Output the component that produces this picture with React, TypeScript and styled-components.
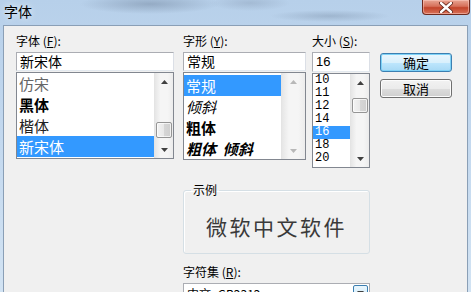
import React from "react";
import styled, { createGlobalStyle } from "styled-components";

const GlobalStyle = createGlobalStyle`
  html, body {
    margin: 0;
    padding: 0;
  }
  body {
    width: 471px;
    height: 292px;
    overflow: hidden;
    font-family: "Noto Sans CJK SC", "Liberation Sans", sans-serif;
    color: #000;
  }
  * {
    box-sizing: border-box;
  }
`;

const fonts = [
  { name: "仿宋", weight: 400, color: "#666" },
  { name: "黑体", weight: 700, color: "#000" },
  { name: "楷体", weight: 400, color: "#222" },
  { name: "新宋体", weight: 400, color: "#000" },
];

const styles = [
  { name: "常规", bold: false, italic: false },
  { name: "倾斜", bold: false, italic: true },
  { name: "粗体", bold: true, italic: false },
  { name: "粗体  倾斜", bold: true, italic: true },
];

const sizes = ["10", "11", "12", "14", "16", "18", "20"];

const Arrow = ({ up, disabled }: { up?: boolean; disabled?: boolean }) => (
  <svg width="7" height="4" viewBox="0 0 7 4">
    <path
      d={up ? "M0 4 L3.5 0 L7 4 Z" : "M0 0 L3.5 4 L7 0 Z"}
      fill={disabled ? "#b8b8b8" : "#404040"}
    />
  </svg>
);

const ScrollBar = ({
  width,
  thumbTop,
  thumbHeight,
  disabled,
}: {
  width: number;
  thumbTop?: number;
  thumbHeight?: number;
  disabled?: boolean;
}) => (
  <Bar $width={width}>
    <BarButton>
      <Arrow up disabled={disabled} />
    </BarButton>
    <Track>
      {thumbHeight ? <Thumb $top={thumbTop || 0} $height={thumbHeight} /> : null}
    </Track>
    <BarButton>
      <Arrow disabled={disabled} />
    </BarButton>
  </Bar>
);

const App = () => {
  return (
    <>
      <GlobalStyle />
      <Frame>
        <TitleBar>
          <Title>字体</Title>
          <CloseButton>
            <svg width="14" height="11" viewBox="0 0 14 11">
              <path
                d="M2 1 L12 10 M12 1 L2 10"
                stroke="#5a1d12"
                strokeWidth="4"
                strokeLinecap="round"
              />
              <path
                d="M2 1 L12 10 M12 1 L2 10"
                stroke="#fff"
                strokeWidth="2.4"
                strokeLinecap="round"
              />
            </svg>
          </CloseButton>
        </TitleBar>
        <Client>
          <FontColumn>
            <Label>
              字体 (<u>F</u>):
            </Label>
            <TextBox>新宋体</TextBox>
            <ListBox $height={87}>
              <Items>
                {fonts.map((f) => (
                  <FontItem
                    key={f.name}
                    $weight={f.weight}
                    $color={f.color}
                    $selected={f.name === "新宋体"}
                  >
                    {f.name}
                  </FontItem>
                ))}
              </Items>
              <ScrollBar width={19} thumbTop={32} thumbHeight={16} />
            </ListBox>
          </FontColumn>

          <Middle>
            <TopRow>
              <StyleColumn>
                <Label>
                  字形 (<u>Y</u>):
                </Label>
                <TextBox>常规</TextBox>
                <ListBox $height={88}>
                  <Items $padTop={2}>
                    {styles.map((s) => (
                      <StyleItem
                        key={s.name}
                        $bold={s.bold}
                        $italic={s.italic}
                        $selected={s.name === "常规"}
                      >
                        {s.name}
                      </StyleItem>
                    ))}
                  </Items>
                  <ScrollBar width={24} disabled />
                </ListBox>
              </StyleColumn>

              <SizeColumn>
                <Label>
                  大小 (<u>S</u>):
                </Label>
                <TextBox $height={20} $num>
                  16
                </TextBox>
                <ListBox $height={95}>
                  <Items>
                    {sizes.map((s) => (
                      <SizeItem key={s} $selected={s === "16"}>
                        {s}
                      </SizeItem>
                    ))}
                  </Items>
                  <ScrollBar width={19} thumbTop={7} thumbHeight={15} />
                </ListBox>
              </SizeColumn>
            </TopRow>

            <SampleGroup>
              <legend>示例</legend>
              <SampleText>微软中文软件</SampleText>
            </SampleGroup>

            <Label $top={10}>
              字符集 (<u>R</u>):
            </Label>
            <Combo>
              <span>中文_GB2312</span>
              <DropButton>
                <Arrow />
              </DropButton>
            </Combo>
          </Middle>

          <ButtonColumn>
            <PushButton $default>确定</PushButton>
            <PushButton>取消</PushButton>
          </ButtonColumn>
        </Client>
      </Frame>
    </>
  );
};

export default App;

const Frame = styled.div`
  width: 471px;
  height: 292px;
  display: flex;
  flex-direction: column;
  padding: 0 3px;
  background:
    radial-gradient(ellipse 70px 10px at 150px 4px, rgba(120, 140, 165, 0.55), transparent),
    radial-gradient(ellipse 40px 8px at 250px 3px, rgba(140, 160, 185, 0.45), transparent),
    radial-gradient(ellipse 60px 6px at 330px 16px, rgba(110, 130, 155, 0.35), transparent),
    linear-gradient(to bottom, #b7d0ea 0%, #c4d9ef 50%, #d2e3f3 100%);
`;

const TitleBar = styled.div`
  height: 25px;
  flex-shrink: 0;
  display: flex;
  justify-content: space-between;
  align-items: flex-start;
`;

const Title = styled.div`
  font-size: 14px;
  line-height: 16px;
  padding: 3px 0 0 1px;
  text-shadow: 0 0 6px rgba(255, 255, 255, 0.9);
`;

const CloseButton = styled.div`
  width: 48px;
  height: 15px;
  margin-right: -2px;
  display: flex;
  align-items: center;
  justify-content: center;
  border: 1px solid #6e2a1e;
  border-top: none;
  border-radius: 0 0 4px 4px;
  background: linear-gradient(to bottom, #e8a593 0%, #d6705a 45%, #c2442a 55%, #d9735a 100%);
  box-shadow: inset 0 0 0 1px rgba(255, 210, 200, 0.5);
`;

const Client = styled.div`
  flex: 1;
  display: flex;
  align-items: flex-start;
  background: #f0f0f0;
  border: 1px solid #8a9fb6;
  border-bottom: none;
  padding: 7px 0 0 12px;
`;

const FontColumn = styled.div`
  width: 158px;
  display: flex;
  flex-direction: column;
`;

const Middle = styled.div`
  width: 187px;
  margin-left: 9px;
  display: flex;
  flex-direction: column;
`;

const TopRow = styled.div`
  display: flex;
  align-items: flex-start;
`;

const StyleColumn = styled.div`
  width: 123px;
  display: flex;
  flex-direction: column;
`;

const SizeColumn = styled.div`
  width: 58px;
  margin-left: 6px;
  display: flex;
  flex-direction: column;
`;

const ButtonColumn = styled.div`
  width: 72px;
  margin-left: 10px;
  padding-top: 20px;
  display: flex;
  flex-direction: column;
  gap: 7px;
`;

const Label = styled.div<{ $top?: number }>`
  height: 19px;
  margin-top: ${(p) => p.$top || 0}px;
  font-size: 12px;
  line-height: 14px;
  padding-top: 1px;
  white-space: pre;

  u {
    text-decoration: underline;
    text-underline-offset: 1px;
  }
`;

const TextBox = styled.div<{ $height?: number; $num?: boolean }>`
  height: ${(p) => p.$height || 19}px;
  background: #fff;
  border: 1px solid #abadb3;
  border-bottom-color: #e3e9ef;
  border-right-color: #dbdfe6;
  padding-left: 3px;
  font-size: ${(p) => (p.$num ? 13 : 14)}px;
  line-height: ${(p) => (p.$height || 19) - 2}px;
  font-family: ${(p) =>
    p.$num ? `"Liberation Sans", sans-serif` : `"Noto Sans CJK SC", sans-serif`};
`;

const ListBox = styled.div<{ $height: number }>`
  height: ${(p) => p.$height}px;
  margin-top: 1px;
  display: flex;
  background: #fff;
  border: 1px solid #828790;
  overflow: hidden;
`;

const Items = styled.div<{ $padTop?: number }>`
  flex: 1;
  padding-top: ${(p) => p.$padTop || 0}px;
  display: flex;
  flex-direction: column;
  overflow: hidden;
`;

const FontItem = styled.div<{ $weight: number; $color: string; $selected?: boolean }>`
  height: 21px;
  flex-shrink: 0;
  padding-left: 2px;
  font-size: 15px;
  line-height: 21px;
  font-weight: ${(p) => p.$weight};
  color: ${(p) => (p.$selected ? "#fff" : p.$color)};
  background: ${(p) => (p.$selected ? "#3399ff" : "transparent")};
`;

const StyleItem = styled.div<{ $bold?: boolean; $italic?: boolean; $selected?: boolean }>`
  height: 21px;
  flex-shrink: 0;
  padding-left: 2px;
  font-size: 15px;
  line-height: 21px;
  white-space: pre;
  font-weight: ${(p) => (p.$bold ? 700 : 400)};
  font-style: ${(p) => (p.$italic ? "italic" : "normal")};
  color: ${(p) => (p.$selected ? "#fff" : "#000")};
  background: ${(p) => (p.$selected ? "#3399ff" : "transparent")};
`;

const SizeItem = styled.div<{ $selected?: boolean }>`
  height: 13px;
  flex-shrink: 0;
  padding-left: 2px;
  font-family: "Liberation Mono", monospace;
  font-size: 12px;
  line-height: 13px;
  color: ${(p) => (p.$selected ? "#fff" : "#000")};
  background: ${(p) => (p.$selected ? "#3399ff" : "transparent")};
`;

const Bar = styled.div<{ $width: number }>`
  width: ${(p) => p.$width}px;
  flex-shrink: 0;
  display: flex;
  flex-direction: column;
  background: linear-gradient(to right, #e6e6e6, #f5f5f5 30%, #f5f5f5 70%, #ececec);
  border-left: 1px solid #e4e4e4;
`;

const BarButton = styled.div`
  height: 17px;
  flex-shrink: 0;
  display: flex;
  align-items: center;
  justify-content: center;
`;

const Track = styled.div`
  flex: 1;
  display: flex;
  flex-direction: column;
  padding: 0 1px;
`;

const Thumb = styled.div<{ $top: number; $height: number }>`
  margin-top: ${(p) => p.$top}px;
  height: ${(p) => p.$height}px;
  border: 1px solid #959595;
  border-radius: 2px;
  background: linear-gradient(to right, #f3f3f3, #e8e8e8 50%, #d6d6d6 51%, #cfcfcf);
  box-shadow: inset 0 0 0 1px rgba(255, 255, 255, 0.7);
`;

const SampleGroup = styled.fieldset`
  margin: 15px 0 0;
  padding: 0;
  border: 1px solid #d5dfe5;
  border-radius: 3px;
  box-shadow: inset 1px 1px 0 #fff;

  legend {
    margin-left: 7px;
    padding: 0 2px;
    font-size: 12px;
    line-height: 14px;
  }
`;

const SampleText = styled.div`
  height: 56px;
  padding-top: 2px;
  display: flex;
  align-items: center;
  justify-content: center;
  font-size: 21px;
  letter-spacing: 2.5px;
  color: #3a3a3a;
`;

const Combo = styled.div`
  height: 20px;
  display: flex;
  align-items: center;
  justify-content: space-between;
  background: #fff;
  border: 1px solid #abadb3;
  padding: 0 1px 0 3px;
  font-size: 12px;

  span {
    font-family: "Noto Sans CJK SC", sans-serif;
  }
`;

const DropButton = styled.div`
  width: 15px;
  height: 16px;
  display: flex;
  align-items: center;
  justify-content: center;
  border: 1px solid #3c7fb1;
  border-radius: 2px;
  background: linear-gradient(to bottom, #eaf6fd, #d9f0fc 50%, #bee6fd 51%, #a7d9f5);
`;

const PushButton = styled.div<{ $default?: boolean }>`
  height: 19px;
  display: flex;
  align-items: center;
  justify-content: center;
  font-size: 13px;
  border-radius: 3px;
  border: 1px solid ${(p) => (p.$default ? "#3c7fb1" : "#707070")};
  background: ${(p) =>
    p.$default
      ? "linear-gradient(to bottom, #eaf6fd, #d9f0fc 50%, #bee6fd 51%, #a7d9f5)"
      : "linear-gradient(to bottom, #f2f2f2, #ebebeb 50%, #dddddd 51%, #cfcfcf)"};
  box-shadow: inset 0 0 0 1px ${(p) => (p.$default ? "#7ed2f7" : "#fcfcfc")};
`;
